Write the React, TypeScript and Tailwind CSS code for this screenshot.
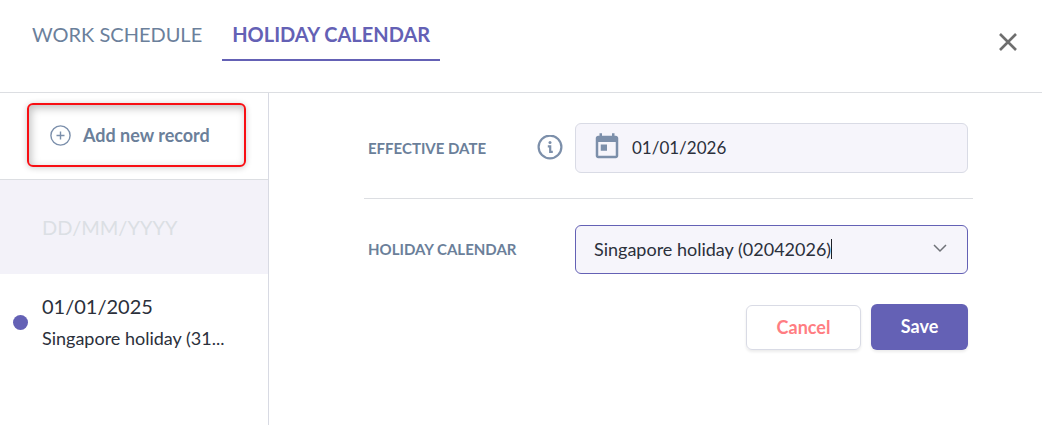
import { useState } from "react";

function CloseIcon() {
  return (
    <svg width="18" height="18" viewBox="0 0 18 18" fill="none" stroke="#6e6e6e" strokeWidth="2.6" aria-hidden="true">
      <path d="M1 1L17 17M17 1L1 17" />
    </svg>
  );
}

function PlusCircleIcon() {
  return (
    <svg width="21" height="21" viewBox="0 0 21 21" fill="none" stroke="#7b8fab" strokeWidth="1.4" aria-hidden="true">
      <circle cx="10.5" cy="10.5" r="9.6" />
      <path d="M10.5 6.5v8M6.5 10.5h8" />
    </svg>
  );
}

function InfoIcon() {
  return (
    <svg width="26" height="26" viewBox="0 0 26 26" fill="none" stroke="#7c8faa" strokeWidth="2.2" aria-hidden="true">
      <circle cx="13" cy="12" r="11.4" />
      <circle cx="13" cy="7.4" r="1.5" fill="#7c8faa" stroke="none" />
      <path d="M10.8 11.4h2.4v5.4h2.6" />
    </svg>
  );
}

function CalendarIcon() {
  return (
    <svg width="30" height="30" viewBox="0 0 24 24" fill="#7c8faa" className="shrink-0" aria-hidden="true">
      <path d="M19 3h-1V1h-2v2H8V1H6v2H5c-1.1 0-1.99.9-1.99 2L3 19c0 1.1.89 2 2 2h14c1.1 0 2-.9 2-2V5c0-1.1-.9-2-2-2zm0 16H5V8h14v11zM7 10h5v5H7z" />
    </svg>
  );
}

function ChevronIcon() {
  return (
    <svg width="14" height="14" viewBox="0 0 14 14" fill="none" stroke="#6f7278" strokeWidth="1.5" aria-hidden="true">
      <path d="M1 3l6 6 6-6" />
    </svg>
  );
}

export default function App() {
  const [date, setDate] = useState("01/01/2026");
  const [calendar, setCalendar] = useState("Singapore holiday (02042026)");

  return (
    <div className="flex min-h-screen flex-col overflow-clip bg-white font-['Lato',sans-serif] text-[#2b303b]">
      <header className="flex items-start justify-between border-b border-[#dcdee2] pr-6 pb-[31px] pl-[22px]">
        <nav className="flex gap-[10px] text-xl leading-6" aria-label="Sections">
          <a href="#work-schedule" className="border-b-2 border-transparent px-[10px] pt-[22px] pb-[13px] text-[#6b809b]">
            WORK SCHEDULE
          </a>
          <a
            href="#holiday-calendar"
            aria-current="page"
            className="border-b-2 border-[#6461b5] px-[10px] pt-[22px] pb-[13px] font-bold text-[#6461b5]"
          >
            HOLIDAY CALENDAR
          </a>
        </nav>
        <button type="button" aria-label="Close" className="mt-[32px] p-[1px]">
          <CloseIcon />
        </button>
      </header>

      <div className="flex grow">
        <aside className="w-[269px] shrink-0 border-r border-[#d8dae3]">
          <div className="border-b border-[#dcdee2] pt-[10px] pr-[22px] pb-3 pl-[27px]">
            <button
              type="button"
              className="flex h-16 w-full items-center gap-3 rounded-md border-2 border-[#f80f14] pl-[21px] text-lg font-bold text-[#6b7f9a] shadow-[0_1px_6px_rgba(0,0,0,0.2),inset_2px_3px_8px_rgba(0,0,0,0.25)]"
            >
              <PlusCircleIcon />
              Add new record
            </button>
          </div>
          <ul>
            <li className="h-[94px] bg-[#f3f2f9] pt-[35px] pl-[42px] text-xl leading-6 text-[#dbdfe4]">DD/MM/YYYY</li>
            <li className="flex items-center gap-[14px] pt-5 pl-[13px]">
              <span className="size-[15px] shrink-0 rounded-full bg-[#6461b5]" />
              <div>
                <p className="text-xl leading-6">01/01/2025</p>
                <p className="mt-2 text-lg leading-6">Singapore holiday (31...</p>
              </div>
            </li>
          </ul>
        </aside>

        <main className="grow pt-[30px] pr-[69px] pl-[95px]">
          <form onSubmit={(e) => e.preventDefault()}>
            <div className="flex items-center border-b border-[#dcdee2] pr-[5px] pb-[25px] pl-1">
              <div className="flex w-[207px] shrink-0 items-center justify-between pr-3">
                <label htmlFor="effective-date" className="text-[15px] font-bold text-[#6b7f9a]">
                  EFFECTIVE DATE
                </label>
                <InfoIcon />
              </div>
              <div className="flex h-[50px] grow items-center gap-[10px] rounded-md border border-[#d9dbe5] bg-[#f6f5fb] pr-4 pb-[2px] pl-4">
                <CalendarIcon />
                <input
                  id="effective-date"
                  type="text"
                  value={date}
                  onChange={(e) => setDate(e.target.value)}
                  className="w-full min-w-0 bg-transparent pt-[2px] text-[17px] outline-none"
                />
              </div>
            </div>

            <div className="flex items-center pt-[26px] pr-[5px] pl-1">
              <label htmlFor="holiday-calendar" className="w-[207px] shrink-0 text-[15px] font-bold text-[#6b7f9a]">
                HOLIDAY CALENDAR
              </label>
              <div className="flex h-[49px] grow items-center rounded-md border border-[#6461b5] bg-[#f6f5fb] pr-5 pb-[2px] pl-[18px]">
                <input
                  id="holiday-calendar"
                  type="text"
                  role="combobox"
                  aria-expanded="false"
                  aria-controls="holiday-calendar-options"
                  value={calendar}
                  onChange={(e) => setCalendar(e.target.value)}
                  className="field-sizing-content bg-transparent text-lg caret-transparent outline-none"
                />
                <span className="h-5 w-px bg-[#1d2026]" />
                <button type="button" aria-label="Show options" className="ml-auto">
                  <ChevronIcon />
                </button>
              </div>
            </div>

            <div className="flex items-end justify-end gap-[10px] pt-[30px] pr-[5px] text-lg font-bold">
              <button
                type="button"
                className="h-[45px] w-[115px] rounded-md border border-[#d9dbe5] pb-[2px] text-[#ff7d82] shadow-[0_2px_3px_rgba(0,0,0,0.08)]"
              >
                Cancel
              </button>
              <button
                type="submit"
                className="h-[46px] w-[97px] rounded-md bg-[#6461b5] pb-[2px] text-white shadow-[0_2px_3px_rgba(0,0,0,0.08)]"
              >
                Save
              </button>
            </div>
          </form>
        </main>
      </div>
    </div>
  );
}
